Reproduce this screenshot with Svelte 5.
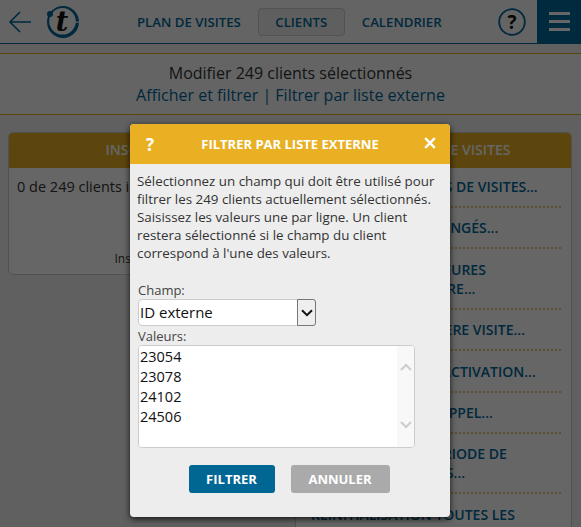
<script>
  const items = [
    ['MODIFIER LES PLANS DE VISITES...'],
    ['CONFIGURER LES CONGÉS...'],
    ['ENREGISTRER LES HEURES', 'DE DÉBUT ET CLÔTURE...'],
    ['MODIFIER LA PREMIÈRE VISITE...'],
    ['MODIFIER DATES D\'ACTIVATION...'],
    ['MODIFIER LE PRÉ-RAPPEL...'],
    ['ENREGISTRER LA PÉRIODE DE', 'ROTATION EXTERNES...'],
    ['RÉINITIALISATION TOUTES LES']
  ];
</script>

<div class="page">
  <header class="top">
    <div class="brand">
      <svg class="back" width="24" height="24" viewBox="0 0 24 24"><path d="M23 12H2M12 2L2 12l10 10" fill="none" stroke="#006699" stroke-width="1.600"/></svg>
      <svg class="logo" width="34" height="34" viewBox="0 0 34 34">
        <path fill-rule="evenodd" d="M17 1a16 16 0 1 0 0 32a16 16 0 1 0 0-32zM16.500 3a13.300 13.300 0 1 1 0 26.600a13.300 13.300 0 1 1 0-26.600z" fill="#006699"/>
        <rect x="29" y="16.500" width="5" height="1.200" fill="#fafafa"/>
        <circle cx="4" cy="9" r="3" fill="#006699"/>
        <text x="16" y="25.500" text-anchor="middle" class="t">t</text>
      </svg>
    </div>
    <nav class="nav">
      <span class="tab">PLAN DE VISITES</span>
      <span class="tab active">CLIENTS</span>
      <span class="tab">CALENDRIER</span>
    </nav>
    <svg class="help" width="28" height="28" viewBox="0 0 28 28">
      <circle cx="14" cy="14" r="12.800" fill="none" stroke="#006699" stroke-width="1.800"/>
      <text x="14" y="20.500" text-anchor="middle" class="q">?</text>
    </svg>
    <div class="burger"><i></i><i></i><i></i></div>
  </header>

  <section class="sub">
    <div class="sub-title">Modifier 249 clients sélectionnés</div>
    <div class="sub-links">Afficher et filtrer | Filtrer par liste externe</div>
  </section>

  <main class="cards">
    <article class="card left">
      <h2>INSCRIPTION</h2>
      <p class="count">0 de 249 clients inscrits</p>
      <p class="note">Inscrire ici...</p>
    </article>
    <article class="card right">
      <h2>FONCTIONS DE VISITES</h2>
      <ul>
        {#each items as lines}
          <li>{#each lines as l}<span>{l}</span>{/each}</li>
        {/each}
      </ul>
    </article>
  </main>

  <div class="overlay"></div>

  <div class="modal">
    <div class="m-head">
      <span class="m-q">?</span>
      <span class="m-title">FILTRER PAR LISTE EXTERNE</span>
      <svg class="m-x" width="12" height="12" viewBox="0 0 12 12"><path d="M1.200 1.200l9.600 9.600M10.800 1.200l-9.600 9.600" stroke="#fff" stroke-width="2.400"/></svg>
    </div>
    <div class="m-body">
      <p class="desc">Sélectionnez un champ qui doit être utilisé pour<br>filtrer les 249 clients actuellement sélectionnés.<br>Saisissez les valeurs une par ligne. Un client<br>restera sélectionné si le champ du client<br>correspond à l'une des valeurs.</p>
      <label class="lbl" for="champ">Champ:</label>
      <div class="select">
        <select id="champ"><option>ID externe</option></select>
        <span class="arrow"><svg width="12" height="8" viewBox="0 0 12 8"><path d="M1 1.200l5 5 5-5" fill="none" stroke="#111" stroke-width="2"/></svg></span>
      </div>
      <label class="lbl val" for="vals">Valeurs:</label>
      <div class="area">
        <textarea id="vals" readonly>23054
23078
24102
24506</textarea>
        <div class="sb">
          <svg width="12" height="8" viewBox="0 0 12 8"><path d="M1 7l5-5 5 5" fill="none" stroke="#cdcdcd" stroke-width="2"/></svg>
          <svg width="12" height="8" viewBox="0 0 12 8"><path d="M1 1l5 5 5-5" fill="none" stroke="#cdcdcd" stroke-width="2"/></svg>
        </div>
      </div>
      <div class="btns">
        <button class="ok">FILTRER</button>
        <button class="cancel">ANNULER</button>
      </div>
    </div>
  </div>
</div>

<style>
  :global(body) { margin: 0; }
  .page {
    position: relative;
    width: 581px;
    height: 527px;
    overflow: hidden;
    background: #f0f0f0;
    font-family: "Open Sans", sans-serif;
    color: #333;
  }
  .top {
    display: flex;
    align-items: center;
    height: 43px;
    background: #fafafa;
    border-bottom: 1px solid #006699;
  }
  .brand { display: flex; align-items: center; width: 137px; flex: none; }
  .back { margin-left: 8px; }
  .logo { margin-left: 14px; }
  .t { font: italic 700 27px "DejaVu Serif", serif; fill: #111; }
  .nav { display: flex; align-items: center; width: 338px; flex: none; }
  .tab {
    font-size: 13.200px;
    font-weight: 600;
    color: #006699;
    white-space: nowrap;
  }
  .tab.active {
    margin: 0 17px 0 17px;
    box-sizing: border-box;
    width: 87px;
    height: 28px;
    line-height: 26px;
    text-align: center;
    border: 1px solid #ccc;
    border-radius: 4px;
    background: #eee;
  }
  .help { margin-left: 23px; flex: none; }
  .q { font: 700 19px "Open Sans", sans-serif; fill: #111; }
  .burger {
    margin-left: auto;
    width: 44px;
    height: 44px;
    background: #006a99;
    display: flex;
    flex-direction: column;
    align-items: center;
    justify-content: center;
    gap: 5px;
    flex: none;
  }
  .burger i { display: block; width: 21px; height: 3px; background: #fff; }
  .sub {
    margin-top: 9px;
    height: 60px;
    background: #fafafa;
    border-top: 1px solid #e6ae22;
    border-bottom: 1px solid #e6ae22;
    display: flex;
    flex-direction: column;
    align-items: center;
    justify-content: center;
    font-size: 16px;
    line-height: 22px;
  }
  .sub-links { color: #006699; }
  .cards {
    display: flex;
    gap: 8px;
    padding: 17px 9px 0 8px;
    align-items: flex-start;
  }
  .card {
    box-sizing: border-box;
    background: #fff;
    border: 1px solid #ccc;
    border-radius: 5px;
    overflow: hidden;
  }
  .card h2 {
    margin: 0;
    height: 35px;
    line-height: 34px;
    background: #e6ae22;
    color: #fff;
    font-size: 14px;
    font-weight: 600;
    text-align: center;
  }
  .left { width: 279px; height: 143px; }
  .left h2 { padding-left: 4px; }
  .right { width: 277px; padding-bottom: 20px; }
  .count { margin: 9px 0 0 8px; font-size: 14.500px; line-height: 20px; white-space: nowrap; }
  .note { margin: 54px 0 0; text-align: center; font-size: 12px; line-height: 16px; }
  ul { list-style: none; margin: 0; padding: 9px 10px 0 15px; }
  li {
    padding: 0 0 10px;
    margin-bottom: 10.400px;
    border-bottom: 2px dotted #e8c878;
    color: #006699;
    font-size: 14px;
    font-weight: 600;
    line-height: 19px;
  }
  li span { display: block; white-space: nowrap; }
  .overlay {
    position: absolute;
    inset: 0;
    background: rgba(0, 0, 0, 0.6);
  }
  .modal {
    position: absolute;
    left: 130px;
    top: 124px;
    width: 320px;
    height: 393px;
    background: #ededed;
    border-radius: 4px;
    box-shadow: 0 2px 6px rgba(0, 0, 0, 0.8);
    overflow: hidden;
  }
  .m-head {
    display: flex;
    align-items: center;
    height: 40px;
    background: #e8b022;
    color: #fff;
    position: relative;
  }
  .m-q { font-size: 17px; font-weight: 700; margin-left: 16px; width: 19px; }
  .m-title {
    flex: 1;
    text-align: center;
    font-size: 13px;
    font-weight: 700;
    margin-right: 35px;
  }
  .m-x { position: absolute; right: 14px; top: 13px; }
  .m-body { padding: 8px 8px 0; }
  .desc { margin: 0 0 0 -1px; font-size: 13.350px; line-height: 18px; color: #333; white-space: nowrap; }
  .lbl { display: block; font-size: 13px; line-height: 16px; color: #444; }
  .lbl:first-of-type { margin-top: 20px; }
  .select {
    position: relative;
    width: 178px;
    height: 27px;
    margin-top: 1px;
  }
  select {
    appearance: none;
    width: 100%;
    height: 100%;
    box-sizing: border-box;
    border: 1px solid #ccc;
    border-radius: 4px;
    background: #fff;
    font: 15px "Open Sans", sans-serif;
    color: #111;
    padding: 0 1px 1px;
    display: block;
  }
  .arrow {
    position: absolute;
    right: 0;
    top: 0;
    bottom: 0;
    width: 19px;
    box-sizing: border-box;
    border: 1px solid #777;
    border-radius: 0 3px 3px 0;
    background: #eee;
    display: flex;
    align-items: center;
    justify-content: center;
  }
  .val { margin-top: 2px; }
  .area {
    display: flex;
    width: 277px;
    height: 103px;
    box-sizing: border-box;
    margin-top: 1px;
    border: 1px solid #ccc;
    border-radius: 4px;
    background: #fff;
    overflow: hidden;
  }
  textarea {
    flex: 1;
    border: 0;
    outline: 0;
    resize: none;
    padding: 1px 1px;
    margin: 0;
    font: 14.500px/20px "Open Sans", sans-serif;
    color: #111;
    background: #fff;
    overflow: hidden;
  }
  .sb {
    width: 17px;
    background: #f8f8f8;
    display: flex;
    flex-direction: column;
    justify-content: space-between;
    align-items: center;
    padding: 17px 0 18px;
    box-sizing: border-box;
  }
  .btns { display: flex; justify-content: center; gap: 16px; margin-top: 17px; padding-right: 2px; }
  button {
    border: 0;
    border-radius: 3px;
    height: 28px;
    color: #fff;
    font: 700 13px "Open Sans", sans-serif;
    padding: 0;
  }
  .ok { width: 86px; background: #006694; }
  .cancel { width: 99px; background: #aaa; }
</style>
